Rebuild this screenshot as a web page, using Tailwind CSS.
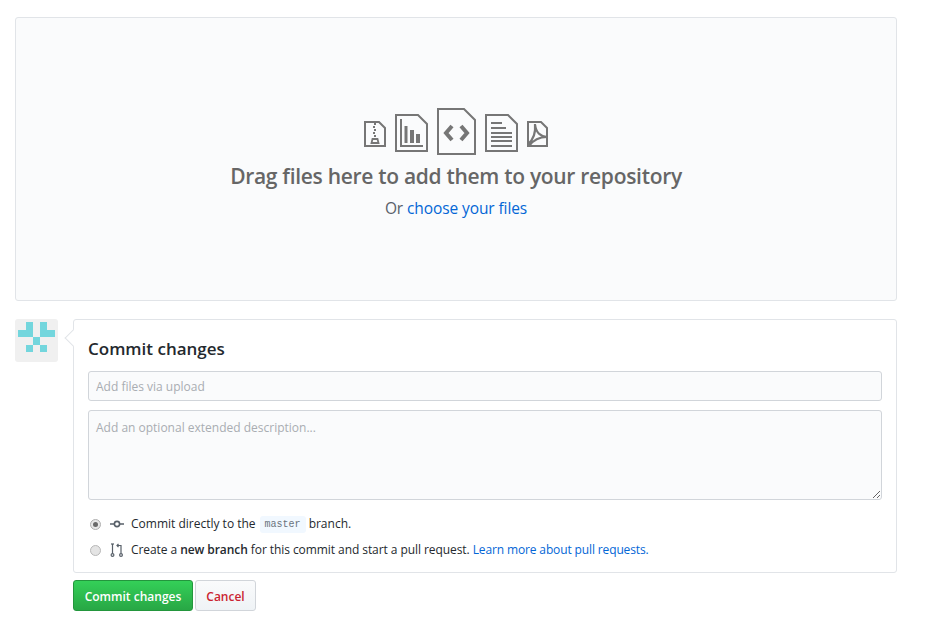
<!DOCTYPE html>
<html lang="en">
<head>
    <meta charset="UTF-8">
    <title>Upload files</title>
    <script src="https://cdn.jsdelivr.net/npm/@tailwindcss/browser@4"></script>
</head>
<body class="bg-white font-['Open_Sans',sans-serif] text-[#24292e] text-[12px] h-[642px] overflow-hidden">
    <div class="w-[882px] ml-[15px] pt-[17px]">
        <!-- Drop zone -->
        <div class="h-[284px] bg-[#fafbfc] border border-[#e1e4e8] rounded-[3px] flex flex-col items-center pt-[90px]">
            <div class="flex items-end h-[48px] gap-[9px] text-[#767676]">
                <svg class="w-[22px] h-[26px] mb-[9px]" viewBox="0 0 22 26" fill="none" stroke="currentColor" stroke-width="2">
                    <path d="M1 1H15L21 7V25H1Z"/>
                    <path d="M10 3h2M9 6h2M10 9h2M9 12h2M10 15h2" stroke-width="2"/>
                    <path d="M8.5 18H13.5L14.5 22H7.5Z" stroke-width="1.8"/>
                </svg>
                <svg class="w-[33px] h-[38px] mb-[4px]" viewBox="0 0 33 38" fill="none" stroke="currentColor" stroke-width="2">
                    <path d="M1 1H23L32 10V37H1Z"/>
                    <path d="M6 5V32H28" />
                    <path d="M11 12V29" stroke-width="3"/>
                    <path d="M17 16V29" stroke-width="4"/>
                    <path d="M23 20V29" stroke-width="4"/>
                </svg>
                <svg class="w-[39px] h-[47px] mb-[1px]" viewBox="0 0 39 47" fill="none" stroke="currentColor" stroke-width="2">
                    <path d="M1 1H27L38 12V46H1Z"/>
                    <path d="M15 18L9 25L15 32M24 18L30 25L24 32" stroke-width="4"/>
                </svg>
                <svg class="w-[33px] h-[38px] mb-[4px]" viewBox="0 0 33 38" fill="none" stroke="currentColor" stroke-width="2">
                    <path d="M1 1H23L32 10V37H1Z"/>
                    <path d="M6 9H17M6 14H21M6 19H27M6 23H27M6 27H27M6 32H27"/>
                </svg>
                <svg class="w-[21px] h-[26px] mb-[9px]" viewBox="0 0 21 26" fill="none" stroke="currentColor" stroke-width="2">
                    <path d="M1 1H14L20 7V25H1Z"/>
                    <path d="M1 23C6 19 9 14 8 3C9 12 13 15 20 16C13 16 7 18 2 25" stroke-width="2.2"/>
                </svg>
            </div>
            <h2 class="mt-[5px] text-[21px] leading-[30px] tracking-[-0.3px] font-semibold text-[#666]">Drag files here to add them to your repository</h2>
            <p class="mt-[5px] text-[15.5px] leading-[24px] tracking-[-0.1px] text-[#586069]">Or <a href="#" class="text-[#0366d6]">choose your files</a></p>
        </div>

        <!-- Commit form -->
        <div class="mt-[18px] flex">
            <div class="w-[43px] h-[43px] bg-[#f0f0f0] rounded-[3px] shrink-0">
                <svg class="w-[37px] h-[30px] ml-[3px] mt-[3px]" viewBox="0 0 37 30" fill="#73d6dd" shape-rendering="crispEdges">
                    <path d="M8 0H15V15H0V8H8Z"/>
                    <path d="M22 0H29V8H37V15H22Z"/>
                    <rect x="15" y="15" width="7" height="8"/>
                    <rect x="8" y="23" width="7" height="7"/>
                    <rect x="22" y="23" width="7" height="7"/>
                </svg>
            </div>
            <div class="ml-[15px] w-[824px]">
                <div class="relative h-[254px] border border-[#e1e4e8] rounded-[3px] bg-white px-[14px] pt-[17px]">
                    <span class="absolute left-[-7px] top-[12px] w-[12px] h-[12px] rotate-45 bg-white border-l border-b border-[#e1e4e8]"></span>
                    <h3 class="text-[17px] leading-[24px] font-semibold text-[#24292e]">Commit changes</h3>
                    <input type="text" placeholder="Add files via upload" class="block mt-[10px] w-full h-[30px] px-[7px] bg-[#fafbfc] border border-[#d1d5da] rounded-[3px] text-[12px] placeholder:text-[#a9adb2] outline-none">
                    <textarea placeholder="Add an optional extended description..." class="block mt-[9px] w-full h-[90px] px-[7px] py-[8px] bg-[#fafbfc] border border-[#d1d5da] rounded-[3px] text-[12px] placeholder:text-[#a9adb2] outline-none"></textarea>
                    <div class="mt-[11px] flex items-center h-[26px]">
                        <span class="flex items-center justify-center w-[11px] h-[11px] ml-[2px] rounded-full border border-[#b0b0b0] bg-[#e8e8e8]">
                            <span class="w-[5px] h-[5px] rounded-full bg-[#6a6a6a]"></span>
                        </span>
                        <svg class="w-[14px] h-[12px] ml-[9px] text-[#586069]" viewBox="0 0 14 12" fill="none" stroke="currentColor" stroke-width="1.6">
                            <circle cx="7" cy="6" r="2.6"/>
                            <path d="M0 6H4.4M9.6 6H14"/>
                        </svg>
                        <span class="ml-[7px]">Commit directly to the</span>
                        <code class="ml-[4px] px-[5px] h-[17px] leading-[17px] bg-[#f1f8ff] rounded-[3px] font-['Liberation_Mono',monospace] text-[10px] text-[#6a737d]">master</code>
                        <span class="ml-[3px]">branch.</span>
                    </div>
                    <div class="flex items-center h-[26px]">
                        <span class="w-[11px] h-[11px] ml-[2px] rounded-full border border-[#b8b8b8] bg-[#e4e4e4]"></span>
                        <svg class="w-[14px] h-[14px] ml-[9px] text-[#586069]" viewBox="0 0 14 14" fill="none" stroke="currentColor" stroke-width="1.2">
                            <circle cx="2.5" cy="12" r="1.4"/>
                            <circle cx="11" cy="12" r="1.4"/>
                            <path d="M2.5 1V10.5M11 10.5V2.5H7.5"/>
                            <path d="M1 1H4"/>
                            <path d="M8.5 0.8L7 2.5L8.5 4.2"/>
                        </svg>
                        <span class="ml-[7px] tracking-[-0.07px]">Create a <b class="font-semibold">new branch</b> for this commit and start a pull request.</span>
                        <a href="#" class="ml-[3px] tracking-[-0.13px] text-[#0366d6]">Learn more about pull requests.</a>
                    </div>
                </div>
                <div class="mt-[7px] flex gap-[2px]">
                    <button class="w-[120px] h-[31px] pt-[2px] rounded-[3px] border border-[#23963d] bg-gradient-to-b from-[#34d058] to-[#28a745] text-white text-[12px] font-semibold">Commit changes</button>
                    <button class="w-[61px] h-[31px] pt-[2px] rounded-[3px] border border-[#d1d5da] bg-gradient-to-b from-[#fafbfc] to-[#eff3f6] text-[#cb2431] text-[12px] font-semibold">Cancel</button>
                </div>
            </div>
        </div>
    </div>
</body>
</html>
